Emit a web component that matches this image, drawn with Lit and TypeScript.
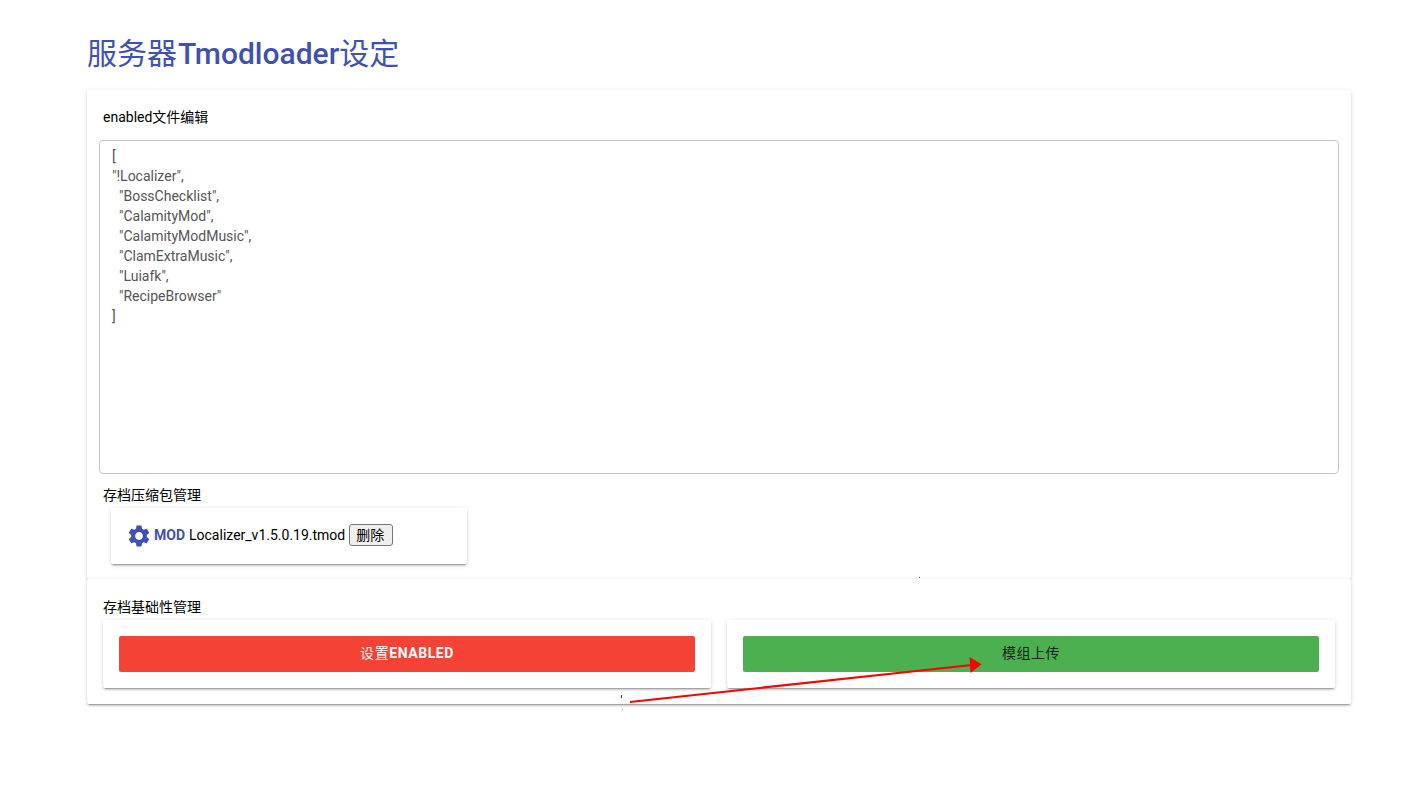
import { LitElement, html, css } from "lit";
import { customElement } from "lit/decorators.js";

const ENABLED = `[
"!Localizer",
  "BossChecklist",
  "CalamityMod",
  "CalamityModMusic",
  "ClamExtraMusic",
  "Luiafk",
  "RecipeBrowser"
]`;

@customElement("app-root")
export class AppRoot extends LitElement {
  static styles = css`
    :host {
      display: block;
      position: relative;
      height: 786px;
      overflow: hidden;
      background: #fff;
      font-family: Roboto, "Noto Sans CJK SC", sans-serif;
      font-size: 14px;
      color: #000;
    }
    .page {
      width: 1264px;
      margin-left: 87px;
      padding-top: 30px;
    }
    h1 {
      margin: 0 0 12px;
      height: 48px;
      font-size: 30px;
      line-height: 48px;
      font-weight: 400;
      color: #3f51b5;
    }
    h1 b { font-weight: 500; padding-left: 1px; }
    .card {
      background: #fff;
      border-radius: 2px;
      box-shadow: 0 3px 1px -2px rgba(0,0,0,.2), 0 2px 2px 0 rgba(0,0,0,.14), 0 1px 5px 0 rgba(0,0,0,.12);
    }
    .top {
      height: 489px;
      padding: 17px 12px 0;
      box-sizing: border-box;
    }
    .label {
      height: 20px;
      line-height: 20px;
      padding-left: 4px;
    }
    textarea {
      display: block;
      box-sizing: border-box;
      width: 1240px;
      height: 334px;
      margin: 13px 0 11px;
      padding: 5px 12px;
      border: 1px solid #c4c4c4;
      border-radius: 4px;
      outline: none;
      resize: none;
      overflow: hidden;
      font: 14px/20px Roboto, "Noto Sans CJK SC", sans-serif;
      color: #555;
    }
    .mod {
      display: flex;
      align-items: center;
      box-sizing: border-box;
      width: 356px;
      height: 56px;
      margin: 3px 0 0 12px;
      padding: 0 16px 2px;
    }
    .mod svg { width: 26px; height: 26px; fill: #3f51b5; flex: none; margin: 1px 2px 0 -1px; }
    .mod strong { font-weight: 700; color: #3f51b5; margin-right: 4px; }
    .mod button {
      margin-left: 4px;
      box-sizing: border-box;
      width: 44px;
      height: 22px;
      padding: 0 2px 0 0;
      border: 1px solid #767676;
      border-radius: 3px;
      background: #efefef;
      font: 14px/20px Roboto, "Noto Sans CJK SC", sans-serif;
      color: #000;
    }
    .bottom {
      position: relative;
      height: 125px;
      padding: 18px 16px 0;
      box-sizing: border-box;
    }
    .bottom .label { padding-left: 0; }
    .grid {
      display: grid;
      grid-template-columns: 608px 608px;
      gap: 16px;
      margin-top: 3px;
    }
    .cell { padding: 16px; height: 68px; box-sizing: border-box; }
    .btn {
      height: 36px;
      line-height: 34px;
      text-align: center;
      border-radius: 2px;
      letter-spacing: .04em;
    }
    .btn b { font-weight: 700; }
    .red { background: #f44336; color: #fff; }
    .green { background: #4caf50; color: #222; }
    .overlay {
      position: absolute;
      left: 0;
      top: 0;
      width: 1416px;
      height: 786px;
      pointer-events: none;
    }
  `;

  render() {
    return html`
      <div class="page">
        <h1>服务器<b>Tmodloader</b>设定</h1>
        <section class="card top">
          <div class="label">enabled文件编辑</div>
          <textarea .value=${ENABLED} spellcheck="false"></textarea>
          <div class="label">存档压缩包管理</div>
          <div class="card mod">
            <svg viewBox="0 0 24 24"><path d="M19.14 12.94c.04-.3.06-.61.06-.94 0-.32-.02-.64-.07-.94l2.03-1.58a.49.49 0 0 0 .12-.61l-1.92-3.32a.488.488 0 0 0-.59-.22l-2.39.96c-.5-.38-1.03-.7-1.62-.94l-.36-2.54a.484.484 0 0 0-.48-.41h-3.84c-.24 0-.43.17-.47.41l-.36 2.54c-.59.24-1.13.57-1.62.94l-2.39-.96c-.22-.08-.47 0-.59.22L2.74 8.87c-.12.21-.08.47.12.61l2.03 1.58c-.05.3-.09.63-.09.94s.02.64.07.94l-2.03 1.58a.49.49 0 0 0-.12.61l1.92 3.32c.12.22.37.29.59.22l2.39-.96c.5.38 1.03.7 1.62.94l.36 2.54c.05.24.24.41.48.41h3.84c.24 0 .44-.17.47-.41l.36-2.54c.59-.24 1.13-.56 1.62-.94l2.39.96c.22.08.47 0 .59-.22l1.92-3.32c.12-.22.07-.47-.12-.61l-2.01-1.58zM12 15.6c-1.98 0-3.6-1.62-3.6-3.6s1.62-3.6 3.6-3.6 3.6 1.62 3.6 3.6-1.62 3.6-3.6 3.6z"/></svg>
            <strong>MOD</strong>
            <span>Localizer_v1.5.0.19.tmod</span>
            <button>删除</button>
          </div>
        </section>
        <section class="card bottom">
          <div class="label">存档基础性管理</div>
          <div class="grid">
            <div class="card cell"><div class="btn red">设置<b>ENABLED</b></div></div>
            <div class="card cell"><div class="btn green">模组上传</div></div>
          </div>
        </section>
      </div>
      <svg class="overlay" viewBox="0 0 1416 786">
        <line x1="630" y1="702" x2="972" y2="665" stroke="#f00" stroke-width="2.2"></line>
        <polygon points="981.5,664.3 969.5,657 970.5,673" fill="#f00"></polygon>
        <rect x="919" y="577" width="1" height="1" fill="#f00"></rect>
        <rect x="621" y="695" width="1" height="3" fill="#e00"></rect>
        <rect x="622" y="709" width="1" height="1" fill="#f88"></rect>
      </svg>
    `;
  }
}
